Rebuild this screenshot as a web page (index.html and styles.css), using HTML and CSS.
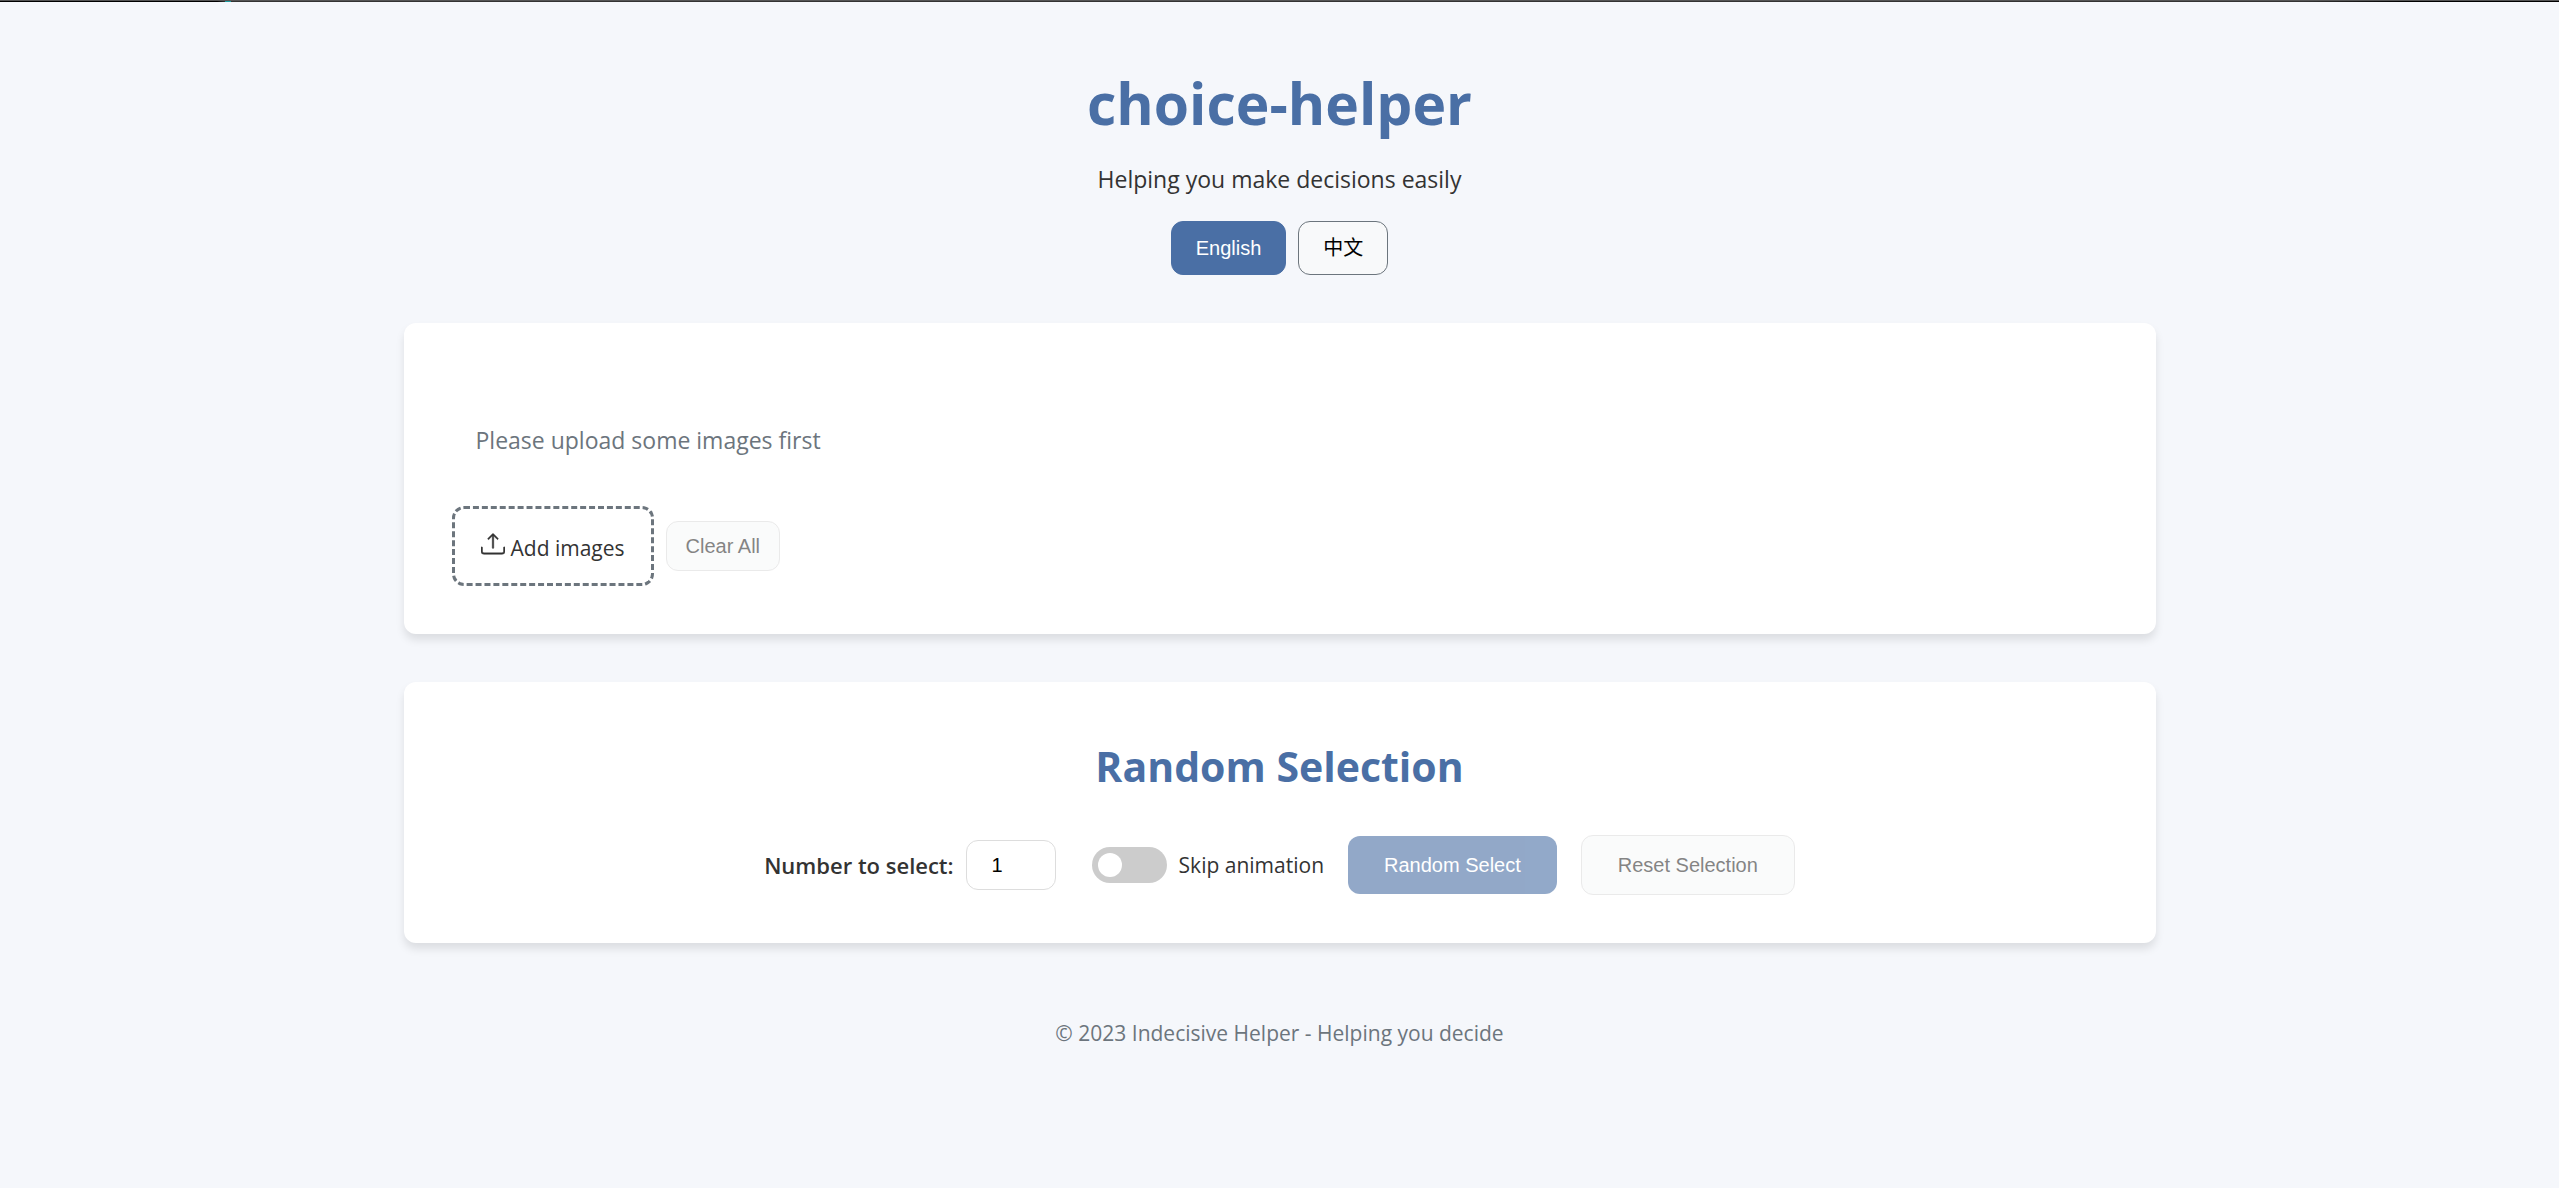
FILE: index.html
```html
<!DOCTYPE html>
<html lang="en">
<head>
<meta charset="utf-8">
<meta name="viewport" content="width=device-width, initial-scale=1">
<title>choice-helper</title>
<link rel="stylesheet" href="styles.css">
</head>
<body>
<div class="top-edge"></div>
<div class="container">
  <header class="header">
    <h1 class="title">choice-helper</h1>
    <p class="tagline">Helping you make decisions easily</p>
    <div class="languages">
      <button type="button" class="btn btn-language btn-active">English</button>
      <button type="button" class="btn btn-language" lang="zh">中文</button>
    </div>
  </header>
  <main class="main">
    <section class="card">
      <p class="empty">Please upload some images first</p>
      <div class="upload-actions">
        <button type="button" class="upload">
          <svg class="upload-icon" viewBox="0 0 16 16" fill="currentColor" aria-hidden="true">
            <path d="M.5 9.9a.5.5 0 0 1 .5.5v2.5a1 1 0 0 0 1 1h12a1 1 0 0 0 1-1v-2.500a.5.5 0 0 1 1 0v2.500a2 2 0 0 1-2 2H2a2 2 0 0 1-2-2v-2.500a.5.5 0 0 1 .5-.5z" stroke="currentColor" stroke-width=".3"/>
            <path d="M7.646 1.146a.5.5 0 0 1 .708 0l3 3a.5.5 0 0 1-.708.708L8.500 2.707V10.500a.5.5 0 0 1-1 0V2.707L5.354 4.854a.5.5 0 1 1-.708-.708l3-3z" stroke="currentColor" stroke-width=".3"/>
          </svg>
          <span class="upload-text">Add images</span>
        </button>
        <button type="button" class="btn btn-clear" disabled>Clear All</button>
      </div>
    </section>
    <section class="card">
      <h2 class="section-title">Random Selection</h2>
      <div class="controls">
        <div class="field">
          <label class="count-label" for="count">Number to select:</label>
          <input class="count" id="count" type="number" min="1" value="1">
        </div>
        <div class="field">
          <input class="switch" id="skip" type="checkbox" role="switch">
          <label class="skip-label" for="skip">Skip animation</label>
        </div>
        <button type="button" class="btn btn-large btn-active btn-select" disabled>Random Select</button>
        <button type="button" class="btn btn-large" disabled>Reset Selection</button>
      </div>
    </section>
  </main>
  <footer class="footer">© 2023 Indecisive Helper - Helping you decide</footer>
</div>
</body>
</html>
```
FILE: styles.css
```css
* {
  box-sizing: border-box;
}

body {
  margin: 0;
  background: #f5f7fb;
  color: #333;
  font-family: "Open Sans", "Noto Sans", sans-serif;
  font-size: 23px;
  line-height: 36px;
}

h1, h2, p {
  margin: 0;
}

.top-edge {
  height: 2px;
  border-top: 1px solid #555;
  background: linear-gradient(90deg, #000 0 217px, #333 225px, #1a9ba0 225px 231px, #333 231px 90%, #000 94%);
}

.container {
  max-width: 1800px;
  margin: 0 auto;
  padding: 57px 24px 24px;
}

.header {
  display: flex;
  flex-direction: column;
  align-items: center;
  margin-bottom: 48px;
}

.title {
  margin-bottom: 14px;
  color: #4a6fa5;
  font-size: 57px;
  line-height: 88px;
}

.tagline {
  margin-bottom: 24px;
}

.languages {
  display: flex;
  gap: 12px;
}

.btn {
  border: 1px solid #ddd;
  border-radius: 12px;
  background: #f8f9fa;
  color: #000;
  font-family: "Liberation Sans", "Noto Sans CJK SC", sans-serif;
  font-size: 20px;
  line-height: 24px;
}

.btn:disabled {
  color: #333;
  opacity: .6;
}

.btn-language {
  padding: 14px 24px;
  border-color: #6c757d;
}

.btn-active,
.btn-active:disabled {
  border-color: #4a6fa5;
  background: #4a6fa5;
  color: #fff;
}

.btn-clear {
  padding: 12px 19px;
}

.btn-large {
  padding: 17px 36px;
}

.btn-select {
  border: 0;
}

.main {
  display: flex;
  flex-direction: column;
  gap: 48px;
}

.card {
  padding: 48px;
  border-radius: 12px;
  background: #fff;
  box-shadow: 0 6px 9px rgba(0, 0, 0, .1);
}

.empty {
  padding: 51px 24px 48px;
  color: #6c757d;
}

.upload-actions {
  display: flex;
  align-items: center;
  gap: 12px;
}

.upload {
  display: flex;
  align-items: center;
  gap: 6px;
  padding: 20px 26px 16px;
  border: 3px dashed #6c757d;
  border-radius: 12px;
  background: none;
  color: #333;
  font: inherit;
  font-size: 21px;
  line-height: 38px;
}

.upload-icon {
  width: 24px;
  height: 24px;
  margin-bottom: 8px;
}

.section-title {
  margin-bottom: 33px;
  color: #4a6fa5;
  font-size: 41px;
  line-height: 72px;
  text-align: center;
}

.controls {
  display: flex;
  flex-wrap: wrap;
  align-items: center;
  justify-content: center;
  gap: 24px;
}

.field {
  display: flex;
  align-items: center;
  gap: 12px;
  margin-right: 12px;
}

.field + .field {
  margin-right: 0;
}

.count-label {
  font-size: 22px;
  font-weight: 600;
}

.count {
  width: 90px;
  padding: 12px 24px 12px 12px;
  border: 1px solid #ddd;
  border-radius: 12px;
  background: #fff;
  color: #000;
  font-family: "Liberation Sans", sans-serif;
  font-size: 20px;
  line-height: 24px;
  text-align: center;
}

.switch {
  display: flex;
  align-items: center;
  width: 75px;
  height: 36px;
  margin: 0;
  padding: 0 6px;
  border-radius: 18px;
  background: #ccc;
  appearance: none;
}

.switch::before {
  content: "";
  width: 24px;
  height: 24px;
  border-radius: 50%;
  background: #fff;
}

.switch:checked {
  justify-content: flex-end;
  background: #4a6fa5;
}

.skip-label {
  font-size: 21px;
}

.footer {
  margin-top: 48px;
  padding: 24px;
  color: #6c757d;
  font-size: 21px;
  text-align: center;
}
```
